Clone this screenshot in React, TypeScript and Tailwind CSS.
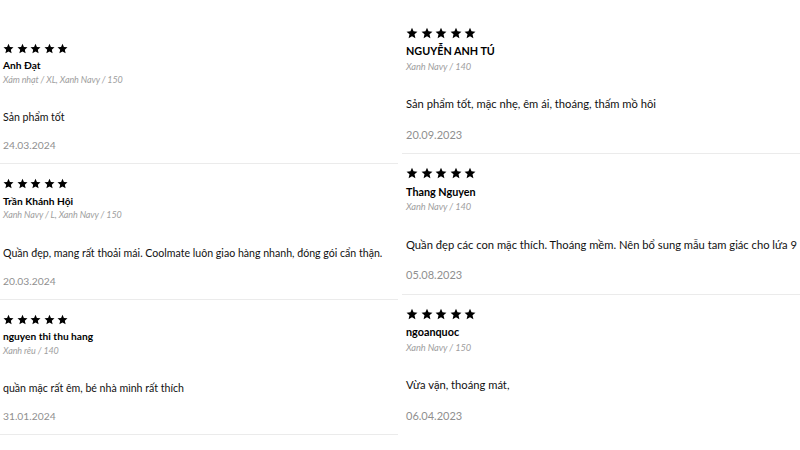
import React from "react";

type Review = { name: string; variant: string; body: string; date: string };

const left: Review[] = [
  { name: "Anh Đạt", variant: "Xám nhạt / XL, Xanh Navy / 150", body: "Sản phẩm tốt", date: "24.03.2024" },
  { name: "Trần Khánh Hội", variant: "Xanh Navy / L, Xanh Navy / 150", body: "Quần đẹp, mang rất thoải mái. Coolmate luôn giao hàng nhanh, đóng gói cẩn thận.", date: "20.03.2024" },
  { name: "nguyen thi thu hang", variant: "Xanh rêu / 140", body: "quần mặc rất êm, bé nhà mình rất thích", date: "31.01.2024" },
];

const right: Review[] = [
  { name: "NGUYỄN ANH TÚ", variant: "Xanh Navy / 140", body: "Sản phẩm tốt, mặc nhẹ, êm ái, thoáng, thấm mồ hôi", date: "20.09.2023" },
  { name: "Thang Nguyen", variant: "Xanh Navy / 140", body: "Quần đẹp các con mặc thích. Thoáng mềm. Nên bổ sung mẫu tam giác cho lứa 9", date: "05.08.2023" },
  { name: "ngoanquoc", variant: "Xanh Navy / 150", body: "Vừa vặn, thoáng mát,", date: "06.04.2023" },
];

function Star({ size }: { size: number }) {
  return (
    <svg width={size} height={size} viewBox="0 0 24 24" fill="#000">
      <path d="M12 1.5l3.1 7.2 7.8.7-5.9 5.2 1.8 7.7L12 18.3l-6.8 4 1.8-7.7L1.1 9.4l7.8-.7z" />
    </svg>
  );
}

function LeftItem({ r, first }: { r: Review; first?: boolean }) {
  return (
    <div className={`pl-[3px] pb-[11px] border-b-[1.5px] border-[#ebebeb] ${first ? "pt-[42.5px]" : "pt-[14px]"}`}>
      <div className="flex gap-[2.6px] h-[11px] items-center">
        {[0, 1, 2, 3, 4].map((i) => <Star key={i} size={11} />)}
      </div>
      <div className="mt-[5.5px] h-[12px] text-[10.2px] leading-[12px] font-bold text-black whitespace-nowrap">{r.name}</div>
      <div className="mt-[3.5px] h-[10px] text-[9px] leading-[10px] italic text-[#a0a0a0] tracking-[-0.1px] whitespace-nowrap">{r.variant}</div>
      <div className="mt-[26.5px] h-[13px] text-[10.6px] leading-[13px] text-[#111] whitespace-nowrap">{r.body}</div>
      <div className="mt-[15px] h-[13px] text-[10.3px] leading-[13px] text-[#8f8f8f]">{r.date}</div>
    </div>
  );
}

function RightItem({ r, first, last }: { r: Review; first?: boolean; last?: boolean }) {
  return (
    <div className={`pl-[4px] pb-[11.5px] ${last ? "" : "border-b-[1.5px] border-[#ebebeb]"} ${first ? "pt-[26.5px]" : "pt-[13px]"}`}>
      <div className="flex gap-[2.6px] h-[12px] items-center">
        {[0, 1, 2, 3, 4].map((i) => <Star key={i} size={12} />)}
      </div>
      <div className="mt-[5.5px] h-[13px] text-[10.8px] leading-[13px] font-bold text-black whitespace-nowrap">{r.name}</div>
      <div className="mt-[3.5px] h-[11px] text-[9.3px] leading-[11px] italic text-[#a0a0a0] tracking-[-0.1px] whitespace-nowrap">{r.variant}</div>
      <div className="mt-[25.5px] h-[14px] text-[11.2px] leading-[14px] text-[#111] whitespace-nowrap">{r.body}</div>
      <div className="mt-[16.5px] h-[14px] text-[11px] leading-[14px] text-[#8f8f8f]">{r.date}</div>
    </div>
  );
}

export default function App() {
  return (
    <div className="w-[800px] h-[450px] overflow-hidden bg-white flex gap-[4px]" style={{ fontFamily: "Lato, 'Noto Sans', sans-serif" }}>
      <div className="w-[398px] shrink-0">
        {left.map((r, i) => <LeftItem key={i} r={r} first={i === 0} />)}
      </div>
      <div className="flex-1 min-w-0">
        {right.map((r, i) => <RightItem key={i} r={r} first={i === 0} last={i === 2} />)}
      </div>
    </div>
  );
}
